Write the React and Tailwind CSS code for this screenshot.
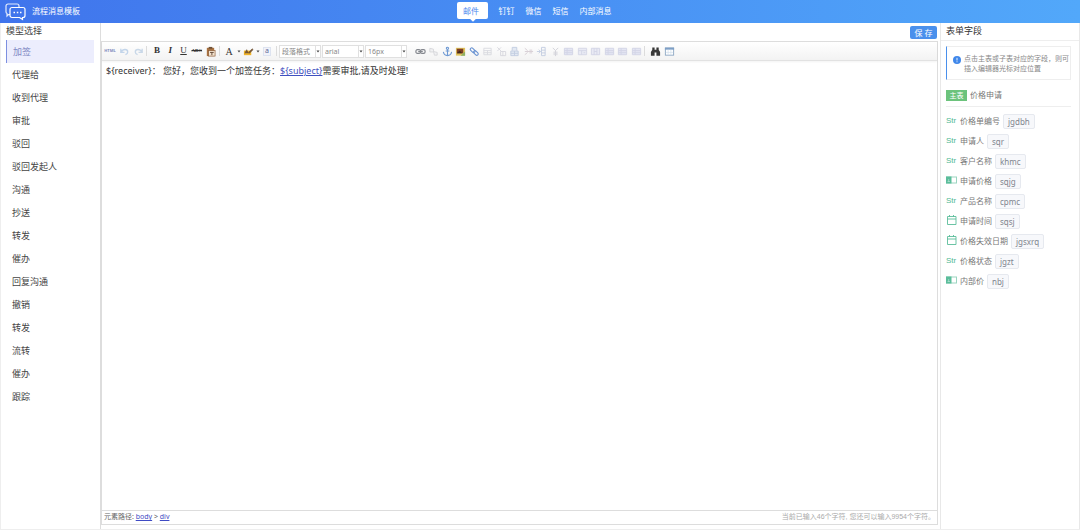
import React, { useState } from 'react';

const TABS = ['邮件', '钉钉', '微信', '短信', '内部消息'];

const TEMPLATES = [
    '加签', '代理给', '收到代理', '审批', '驳回', '驳回发起人', '沟通', '抄送',
    '转发', '催办', '回复沟通', '撤销', '转发', '流转', '催办', '跟踪'
];

const FIELDS = [
    { type: 'string', label: '价格单编号', code: 'jgdbh' },
    { type: 'string', label: '申请人', code: 'sqr' },
    { type: 'string', label: '客户名称', code: 'khmc' },
    { type: 'number', label: '申请价格', code: 'sqjg' },
    { type: 'string', label: '产品名称', code: 'cpmc' },
    { type: 'date', label: '申请时间', code: 'sqsj' },
    { type: 'date', label: '价格失效日期', code: 'jgsxrq' },
    { type: 'string', label: '价格状态', code: 'jgzt' },
    { type: 'number', label: '内部价', code: 'nbj' }
];

// Drawings for the editor toolbar, all on a 12x12 grid
const ICONS = {
    undo: <path d="M2 3v4h4M2.500 6.500C4 3 9.500 3 9.500 6.500c0 1.500-1 2.500-2.500 3" fill="none" stroke="#c3d5ea" strokeWidth="1.500" />,
    redo: <path d="M10 3v4H6M9.500 6.500C8 3 2.500 3 2.500 6.500c0 1.500 1 2.500 2.500 3" fill="none" stroke="#c9d8e8" strokeWidth="1.500" />,
    paste: (
        <g>
            <rect x="2" y="2" width="8" height="9" fill="#a9713f" />
            <rect x="4" y="1" width="4" height="2" fill="#6d5138" />
            <rect x="4" y="5" width="7" height="6" fill="#f3e3d0" stroke="#8a5a35" strokeWidth="0.7" />
            <path d="M5.500 7h4M7.500 7v3" stroke="#5e4330" />
        </g>
    ),
    marker: (
        <g>
            <rect x="1" y="5" width="8" height="5" fill="#f0b429" />
            <path d="M2 8l2-4 2 4M6 7l4-4 1 1-4 4z" fill="#77593a" stroke="#6b4b2c" strokeWidth="0.6" />
        </g>
    ),
    link: (
        <g fill="none" stroke="#85888f" strokeWidth="1.300">
            <rect x="1" y="4" width="5" height="4" rx="1.500" />
            <rect x="6" y="4" width="5" height="4" rx="1.500" />
            <path d="M3.500 6h5" />
        </g>
    ),
    unlink: <path d="M2 2.500l4 1v3M2 2.500v4h4M6 6l4 1v3H7z" fill="#f1f1f3" stroke="#d5d6da" />,
    anchor: (
        <g fill="none" stroke="#6f9ad4" strokeWidth="1.200">
            <circle cx="6" cy="2.500" r="1.200" />
            <path d="M6 4v6.500M4 5.500h4M1.500 6.500c.5 3 2.500 4 4.500 4s4-1 4.500-4" />
        </g>
    ),
    image: (
        <g>
            <rect x="1" y="2" width="10" height="8.500" fill="#e0c25b" />
            <rect x="2" y="3" width="7" height="5" fill="#7d3f25" />
            <path d="M2 8l3-3 3 3z" fill="#3f2a1e" />
            <path d="M6 10.500L11 6v4.500z" fill="#8db065" />
        </g>
    ),
    attach: (
        <g fill="none" stroke="#6a93d2" strokeWidth="1.200">
            <rect x="1" y="3" width="6" height="3.200" rx="1.600" transform="rotate(45 4 4.600)" />
            <rect x="4.500" y="6" width="6" height="3.200" rx="1.600" transform="rotate(45 7.500 7.600)" />
        </g>
    ),
    table: <path d="M2 2.500h8v7H2zM2 5h8M2 7.300h8M6 5v4.500" fill="none" stroke="#d9dadf" />,
    delTable: <path d="M1.500 1.500l4 4M5.500 1.500l-4 4M5 6h5.500v4.500H5zM7.500 6v4.500" fill="none" stroke="#d6d7dd" />,
    rowBefore: <path d="M3.500 5V1.500h5V5M2 5.500h8v5H2zM2 8h8M6 5.500v5" fill="#e3e9f3" stroke="#c2cde0" />,
    delRow: <path d="M2 2.500l3 2.500M2 9.500l3-2.500M2 6h9M7 4.500h3M7 7.500h3" fill="none" stroke="#d5cdd3" />,
    colBefore: <path d="M1 6h4M3 4l2 2-2 2M6 1.500h4v9H6zM6 4.500h4M6 7.500h4" fill="none" stroke="#c3cde0" />,
    delCol: <path d="M3 2l3 3 3-3M6 5v6M4.500 6v4M7.500 6v4" fill="none" stroke="#d0d0d8" />,
    merge: <path d="M1.500 2.500h9v7h-9zM1.500 5h9M1.500 7.300h9M4.500 2.500v7" fill="#e4e6f3" stroke="#d2d4e6" />,
    mergeRight: <path d="M1.500 2.500h9v7h-9zM1.500 5h9M5 5v4.500M7 7.300h2" fill="#e9eaf4" stroke="#d4d6e6" />,
    mergeDown: <path d="M1.500 2.500h9v7h-9zM4.500 2.500v7M7.500 2.500v7M4.500 6h3" fill="#e9eaf4" stroke="#d2d4e6" />,
    search: <path d="M2.500 1.500H5V4h2V1.500h2.500V4L11 6.500v4H7V7H5v3.500H1v-4L2.500 4z" fill="#383838" />,
    calendar: (
        <g>
            <rect x="1.500" y="2" width="9" height="8" fill="#fff" stroke="#8ea8c4" />
            <rect x="1" y="2" width="10" height="2" fill="#7d9fc6" />
            <path d="M2 7h8M4.500 4v6M7.500 4v6" stroke="#cfdceb" strokeWidth="0.7" />
        </g>
    )
};

const INSERT_TOOLS = [
    ['link', '超链接'], ['unlink', '取消链接'], ['anchor', '锚点'], ['image', '图片'],
    ['attach', '附件'], ['table', '插入表格'], ['delTable', '删除表格'], ['rowBefore', '前插入行'],
    ['delRow', '删除行'], ['colBefore', '前插入列'], ['delCol', '删除列'], ['merge', '合并单元格'],
    ['mergeRight', '右合并单元格'], ['mergeDown', '下合并单元格'], ['merge', '拆分单元格'],
    ['merge', '拆分成行'], ['merge', '拆分成列']
];

function ToolButton({ icon, title, children }) {
    return (
        <button type="button" title={title} aria-label={title} className="flex h-3 w-3 shrink-0 items-center justify-center">
            {icon ? <svg viewBox="0 0 12 12" className="h-[11px] w-[11px]">{ICONS[icon]}</svg> : children}
        </button>
    );
}

function Caret() {
    return (
        <svg viewBox="0 0 4 3" className="h-[3px] w-1 shrink-0">
            <path d="M0.500 0.500h3L2 2.500z" fill="#444" />
        </svg>
    );
}

function Separator() {
    return <span className="h-[10px] w-px shrink-0 bg-[#dcdcdc]" />;
}

function ToolSelect({ label, options }) {
    return (
        <div className="flex h-[13px] w-[42px] shrink-0 border border-[#e0e0e0] bg-white">
            <select aria-label={label} className="w-[35px] appearance-none bg-transparent pl-[2px] text-[7px] leading-[11px] text-[#888] outline-none">
                {options.map((o) => <option key={o}>{o}</option>)}
            </select>
            <span className="flex flex-1 items-center justify-center border-l border-[#e0e0e0]"><Caret /></span>
        </div>
    );
}

function Toolbar() {
    return (
        <div className="flex h-[19px] shrink-0 items-center overflow-hidden border-b border-[#e2e2e2] bg-linear-to-b from-white to-[#f3f3f3] pl-[2px] shadow-xs">
            <div className="flex w-10 shrink-0 justify-between">
                <ToolButton title="源代码">
                    <span className="text-[4px] font-bold text-[#8089bd]">HTML</span>
                </ToolButton>
                <ToolButton icon="undo" title="撤销" />
                <ToolButton icon="redo" title="重做" />
            </div>
            <div className="ml-[2px] flex"><Separator /></div>
            <div className="ml-1 flex w-[65px] shrink-0 justify-between font-['Liberation_Serif',serif] text-[9px] text-[#333]">
                <ToolButton title="加粗"><b>B</b></ToolButton>
                <ToolButton title="斜体"><b><i>I</i></b></ToolButton>
                <ToolButton title="下划线"><u>U</u></ToolButton>
                <ToolButton title="删除线"><s className="text-[5px] font-bold">ABC</s></ToolButton>
                <ToolButton icon="paste" title="纯文本粘贴" />
            </div>
            <div className="ml-[3px] flex"><Separator /></div>
            <div className="ml-[3px] flex w-[50px] shrink-0 items-center justify-between">
                <div className="flex items-center gap-[2px]">
                    <ToolButton title="字体颜色">
                        <span className="font-['Liberation_Serif',serif] text-[10px] text-[#333]">A</span>
                    </ToolButton>
                    <Caret />
                </div>
                <div className="flex items-center gap-[2px]">
                    <ToolButton icon="marker" title="背景色" />
                    <Caret />
                </div>
                <ToolButton title="自动排版">
                    <span className="h-[9px] w-2 border border-[#dde3f0] bg-[#f1f3fa] text-[7px] leading-[6px] text-[#5c6796]">a</span>
                </ToolButton>
            </div>
            <div className="ml-[3px] flex"><Separator /></div>
            <div className="ml-[2px] flex shrink-0 gap-px">
                <ToolSelect label="段落格式" options={['段落格式', '段落', '标题 1', '标题 2']} />
                <ToolSelect label="字体" options={['arial', '宋体', '微软雅黑']} />
                <ToolSelect label="字号" options={['16px', '14px', '12px', '10px']} />
            </div>
            <div className="ml-[7px] flex w-[228px] shrink-0 justify-between">
                {INSERT_TOOLS.map(([icon, title]) => <ToolButton key={title} icon={icon} title={title} />)}
            </div>
            <div className="ml-[2px] flex"><Separator /></div>
            <div className="ml-1 flex shrink-0 gap-[2px]">
                <ToolButton icon="search" title="查询替换" />
                <ToolButton icon="calendar" title="日期" />
            </div>
        </div>
    );
}

function Header({ tab, onChange }) {
    return (
        <header className="grid h-[23px] shrink-0 grid-cols-[1fr_auto_1fr] items-center bg-linear-to-r from-[#4074ec] to-[#52a8fa] text-[8px] text-white">
            <div className="flex items-center gap-[6px] pl-[5px]">
                <svg viewBox="0 0 21 18" className="h-[18px] w-[21px]" fill="none" stroke="#fff" strokeWidth="1.200">
                    <path d="M5 11.500H3.500L2 13V10.500A2 2 0 011 9V3a2 2 0 012-2h9a2 2 0 012 2v1" opacity="0.85" />
                    <path d="M7 4.500h11a2 2 0 012 2v6a2 2 0 01-2 2h-.5v2l-3-2H7a2 2 0 01-2-2v-6a2 2 0 012-2z" />
                    <path d="M8.500 9.500h1.500M11.800 9.500h1.500M15 9.500h1.500" strokeWidth="1.500" />
                </svg>
                <h1 className="pb-[2px]">流程消息模板</h1>
            </div>
            <nav className="flex items-center gap-[11px] pb-[2px] pr-3">
                {TABS.map((name) => (
                    <button
                        key={name}
                        type="button"
                        onClick={() => onChange(name)}
                        className={name === tab
                            ? 'relative h-[17px] w-[31px] rounded-[2px] bg-white pr-[2px] text-[#4a86ee]'
                            : 'h-[17px]'}
                    >
                        {name}
                        {name === tab && <span className="absolute -bottom-[2px] left-[14px] h-1 w-1 rotate-45 bg-white" />}
                    </button>
                ))}
            </nav>
        </header>
    );
}

function FieldIcon({ type }) {
    if (type === 'string') {
        return <span className="w-[11px] pb-px font-['Liberation_Sans',sans-serif] text-[8px] leading-[10px] text-[#4fb893]">Str</span>;
    }
    if (type === 'number') {
        return (
            <svg viewBox="0 0 11 10" className="mb-[2px] h-[10px] w-[11px]">
                <rect x="0.500" y="2" width="10" height="6" fill="#fff" stroke="#9bd5c0" />
                <rect x="0" y="1.500" width="5.500" height="7" fill="#5bbd9b" />
                <path d="M1.500 6.500h2.500M2.700 4v2.500" stroke="#c8eadf" strokeWidth="0.600" />
            </svg>
        );
    }
    return (
        <svg viewBox="0 0 11 10" className="mb-[2px] h-[10px] w-[11px]" fill="none" stroke="#5bbd9b" strokeWidth="0.900">
            <path d="M1.500 1.500h8.500v8h-8.500zM1.500 4h8.500M3.500 0v2M7.500 0v2" />
        </svg>
    );
}

export default function App() {
    const [tab, setTab] = useState('邮件');
    const [active, setActive] = useState(0);

    return (
        <div className="flex h-screen flex-col bg-white font-['Noto_Sans','Noto_Sans_CJK_SC',sans-serif] text-[#444]">
            <Header tab={tab} onChange={setTab} />

            <main className="flex min-h-0 flex-1 border-b border-l border-[#eee]">
                {/* Template list */}
                <aside className="w-[100px] shrink-0 border-r border-[#ddd] pl-[5px] text-[9px]">
                    <h2 className="h-[17px] leading-[16px]">模型选择</h2>
                    <ul>
                        {TEMPLATES.map((name, i) => (
                            <li key={i}>
                                <button
                                    type="button"
                                    onClick={() => setActive(i)}
                                    className={i === active
                                        ? 'block h-[23px] w-[88px] border-l border-[#7d8fe0] bg-[#ecedfd] pl-[6px] text-left text-[#8088c4]'
                                        : 'block h-[23px] w-[88px] pl-[6px] text-left'}
                                >
                                    {name}
                                </button>
                            </li>
                        ))}
                    </ul>
                </aside>

                {/* Editor */}
                <section className="flex min-w-0 flex-1 flex-col pb-1">
                    <div className="flex h-[18px] shrink-0 items-center justify-end px-[3px]">
                        <button type="button" className="h-[13px] w-[27px] rounded-[2px] bg-[#4a90ec] text-[8px] leading-[13px] text-white">保 存</button>
                    </div>
                    <div className="mr-[2px] flex min-h-0 flex-1 flex-col border border-[#ddd]">
                        <Toolbar />
                        <div
                            contentEditable
                            suppressContentEditableWarning
                            role="textbox"
                            aria-label="模板内容"
                            className="flex-1 px-1 py-[3px] text-[9px] leading-[14px] text-[#333] outline-none"
                        >
                            {'${receiver}： 您好，您收到一个加签任务：'}
                            <a href="#subject" className="text-[#3f51c0] underline">{'${subject}'}</a>
                            需要审批,请及时处理!
                        </div>
                        <div className="flex h-[14px] shrink-0 items-center justify-between border-t border-[#ddd] px-[2px] text-[7px]">
                            <div className="text-[#666]">
                                元素路径: <a href="#body" className="text-[#3f4bc4] underline">body</a>
                                {' > '}
                                <a href="#div" className="text-[#3f4bc4] underline">div</a>
                            </div>
                            <div className="font-['Liberation_Sans','Noto_Sans_CJK_SC',sans-serif] text-[#aaa]">当前已输入46个字符, 您还可以输入9954个字符。</div>
                        </div>
                    </div>
                </section>

                {/* Form fields */}
                <aside className="w-[140px] shrink-0 border-x border-[#e8e8e8]">
                    <h2 className="h-[18px] border-b border-[#eee] pl-[5px] text-[9px] leading-[16px] text-[#333]">表单字段</h2>
                    <div className="pl-[5px] pr-[8px] pt-[5px]">
                        <div className="flex h-[34px] gap-[3px] border border-[#eee] border-l-[#4a90ec] pl-[6px] pt-[7px] text-[7px] leading-[10px] text-[#888]">
                            <svg viewBox="0 0 8 8" className="mt-[2px] h-2 w-2 shrink-0">
                                <circle cx="4" cy="4" r="4" fill="#3f87ea" />
                                <path d="M4 1.800v2.700M4 5.300v1" stroke="#fff" strokeWidth="0.900" />
                            </svg>
                            <p>点击主表或子表对应的字段，则可<br />插入编辑器光标对应位置</p>
                        </div>
                        <div className="mt-1 flex h-[23px] items-center gap-[3px] border-b border-[#eee] text-[8px] text-[#777]">
                            <span className="h-[11px] w-[21px] bg-[#6cc37c] text-center text-[7px] leading-[11px] text-white">主表</span>
                            价格申请
                        </div>
                        <ul className="mt-1">
                            {FIELDS.map((f) => (
                                <li key={f.code} className="flex h-5 items-center gap-[3px] text-[8px] text-[#777]">
                                    <FieldIcon type={f.type} />
                                    <span>{f.label}</span>
                                    <button type="button" className="h-[15px] rounded-[2px] border border-[#e6e9ef] bg-[#f7f8fb] px-1 leading-[13px] text-[#80858e]">{f.code}</button>
                                </li>
                            ))}
                        </ul>
                    </div>
                </aside>
            </main>
        </div>
    );
}
